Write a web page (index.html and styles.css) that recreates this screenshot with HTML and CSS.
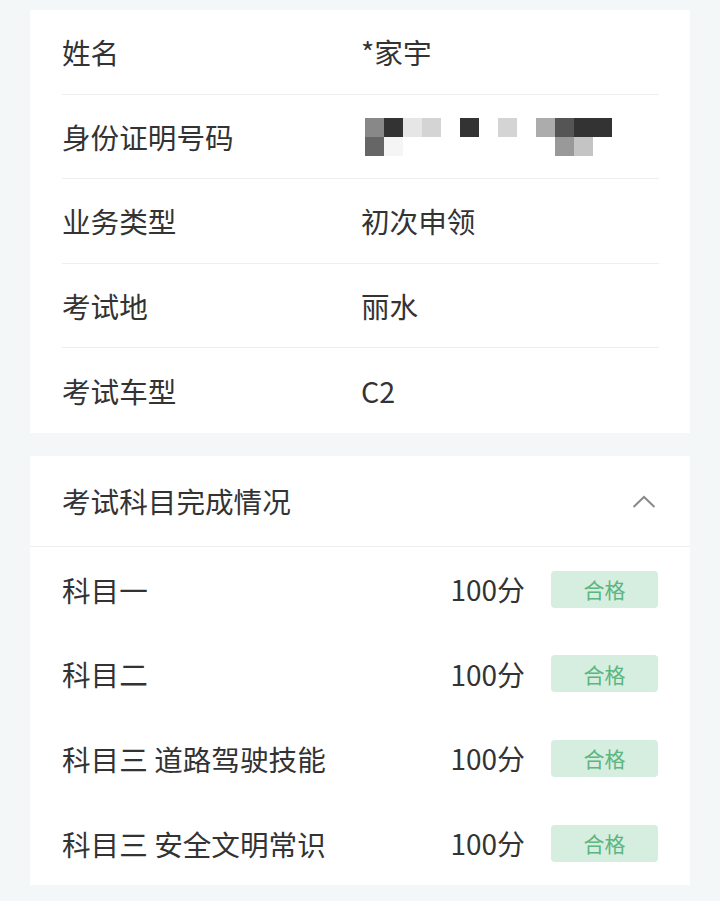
FILE: index.html
```html
<!DOCTYPE html>
<html lang="zh-CN">
<head>
<meta charset="utf-8">
<title>考试信息</title>
<link rel="stylesheet" href="styles.css">
</head>
<body>
<div class="page">
  <section class="card info">
    <div class="row"><span class="label">姓名</span><span class="value">*家宇</span></div>
    <div class="row"><span class="label">身份证明号码</span>
      <span class="value">
        <span class="mosaic">
          <i class="c1 s88"></i><i class="c2 s33"></i><i class="c3 se6"></i><i class="c4 sd4"></i>
          <i class="c6 s33"></i><i class="c8 sd4"></i>
          <i class="c10 saa"></i><i class="c11 s55"></i><i class="c12 s33"></i><i class="c13 s33"></i>
          <i class="c1 r2 s66"></i><i class="c2 r2 sf5"></i>
          <i class="c11 r2 s99"></i><i class="c12 r2 sc4"></i>
        </span>
      </span>
    </div>
    <div class="row"><span class="label">业务类型</span><span class="value">初次申领</span></div>
    <div class="row"><span class="label">考试地</span><span class="value">丽水</span></div>
    <div class="row last"><span class="label">考试车型</span><span class="value">C2</span></div>
  </section>

  <section class="card subjects">
    <div class="head">
      <span class="title">考试科目完成情况</span>
      <svg class="chev" width="24" height="14" viewBox="0 0 24 14"><path d="M1.5 12 L12 2 L22.5 12" fill="none" stroke="#8a8a8a" stroke-width="2"/></svg>
    </div>
    <div class="subj"><span class="sname">科目一</span><span class="score">100分</span><span class="badge">合格</span></div>
    <div class="subj"><span class="sname">科目二</span><span class="score">100分</span><span class="badge">合格</span></div>
    <div class="subj"><span class="sname">科目三 道路驾驶技能</span><span class="score">100分</span><span class="badge">合格</span></div>
    <div class="subj last"><span class="sname">科目三 安全文明常识</span><span class="score">100分</span><span class="badge">合格</span></div>
  </section>
</div>
</body>
</html>
```

FILE: styles.css
```css
* { box-sizing: border-box; }
html, body {
  margin: 0;
  padding: 0;
  background: #f4f7f8;
}
body {
  font-family: "Noto Sans CJK SC", "Noto Sans", sans-serif;
  color: #333;
  width: 720px;
  height: 901px;
  overflow: hidden;
}
.page {
  padding: 10px 30px 0 30px;
  display: flex;
  flex-direction: column;
  gap: 23px;
}
.card {
  background: #fff;
}
.info {
  padding: 0 31px 0 32px;
}
.row {
  height: 84.6px;
  display: flex;
  align-items: center;
  border-bottom: 1px solid #eeeeee;
  font-size: 28.6px;
}
.row.last { border-bottom: none; }
.label {
  width: 299px;
  flex: none;
}
.value {
  display: flex;
  align-items: center;
}
.mosaic {
  display: grid;
  grid-template-columns: repeat(13, 19px);
  grid-template-rows: repeat(2, 19px);
  margin-left: 4px;
  margin-top: 2px;
}
.mosaic i { display: block; grid-row: 1; }
.mosaic i.r2 { grid-row: 2; }
.c1 { grid-column: 1; } .c2 { grid-column: 2; } .c3 { grid-column: 3; } .c4 { grid-column: 4; }
.c6 { grid-column: 6; } .c8 { grid-column: 8; } .c10 { grid-column: 10; } .c11 { grid-column: 11; }
.c12 { grid-column: 12; } .c13 { grid-column: 13; }
.s88 { background: #888; } .s33 { background: #333; } .se6 { background: #e6e6e6; }
.sd4 { background: #d4d4d4; } .saa { background: #acacac; } .s55 { background: #555; }
.s66 { background: #666; } .sf5 { background: #f5f5f5; } .s99 { background: #999; }
.sc4 { background: #c4c4c4; }

.head {
  height: 91px;
  display: flex;
  align-items: center;
  justify-content: space-between;
  padding: 0 34px 0 32px;
  border-bottom: 1px solid #eeeeee;
  font-size: 28.6px;
}
.chev { display: block; margin-top: 2px; }
.subj {
  height: 84.6px;
  display: flex;
  align-items: center;
  padding: 0 32px 0 32px;
  font-size: 28.6px;
}
.sname { flex: 1; }
.score {
  margin-right: 26px;
  font-size: 28px;
}
.badge {
  width: 107px;
  height: 37px;
  border-radius: 4px;
  background: #d5eee0;
  color: #5db57f;
  font-size: 21px;
  display: flex;
  align-items: center;
  justify-content: center;
}
```
